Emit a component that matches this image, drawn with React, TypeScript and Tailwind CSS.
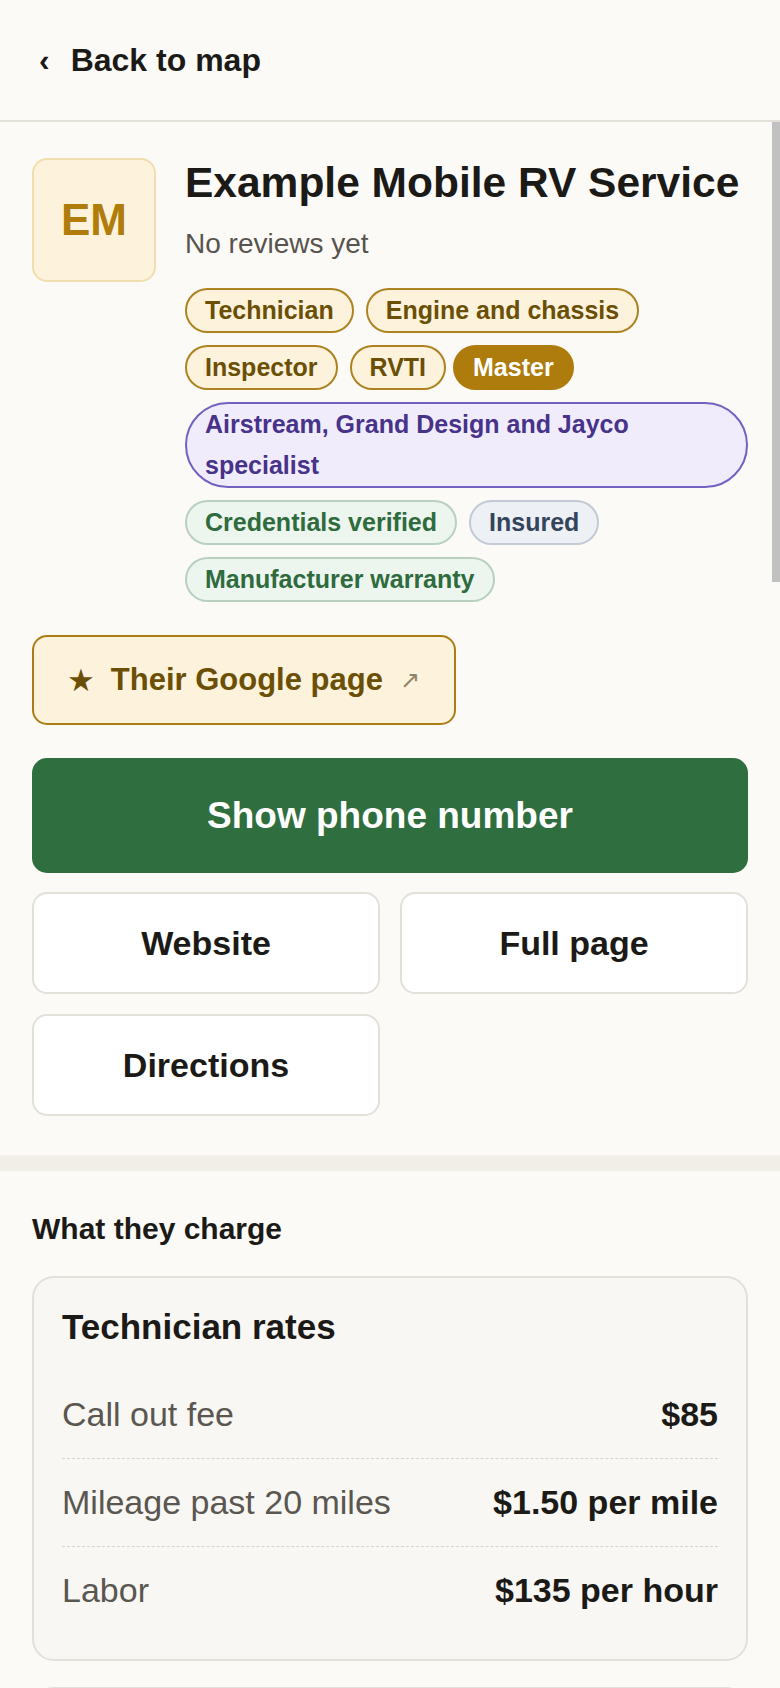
import React from 'react';

const goldPills = ['Technician', 'Engine and chassis', 'Inspector'];

const rates = [
    { label: 'Call out fee', value: '$85' },
    { label: 'Mileage past 20 miles', value: '$1.50 per mile' },
    { label: 'Labor', value: '$135 per hour' },
];

const pill = 'inline-flex items-center rounded-full border-2 px-[18px] text-[25px] leading-[41px] font-bold';

const App = () => {
    return (
        <div className="flex h-[1688px] w-full flex-col overflow-hidden bg-[#fbfaf7] font-['Liberation_Sans',Arial,sans-serif] text-[#1c1a17]">
            {/* Header */}
            <header className="flex h-[122px] shrink-0 items-center gap-[21px] border-b-2 border-[#e3e0d9] pl-[39px]">
                <span className="text-[32px] font-bold">‹</span>
                <span className="text-[32px] font-bold">Back to map</span>
            </header>

            <main className="relative flex-1 overflow-hidden">
                {/* scroll thumb */}
                <div className="absolute top-0 right-0 h-[460px] w-2 bg-[#c1c1c1]" />

                <section className="px-8 pt-[36px] pb-[39px]">
                    <div className="flex gap-[29px]">
                        <div className="flex h-[124px] w-[124px] shrink-0 items-center justify-center rounded-[15px] border-2 border-[#f0dfae] bg-[#fdf3dc] text-[44px] font-bold text-[#b07d0a]">
                            EM
                        </div>
                        <div className="min-w-0 flex-1">
                            <h1 className="text-[42.5px] leading-[50px] font-bold whitespace-nowrap">Example Mobile RV Service</h1>
                            <p className="mt-[15px] text-[28px] leading-[42px] text-[#57534e]">No reviews yet</p>
                            <div className="mt-[23px] flex flex-wrap gap-3">
                                {goldPills.map((p) => (
                                    <span key={p} className={`${pill} border-[#ad8220] bg-[#fdf3dc] text-[#6b4f05]`}>
                                        {p}
                                    </span>
                                ))}
                                <span className="flex gap-[7px]">
                                    <span className={`${pill} border-[#ad8220] bg-[#fdf3dc] text-[#6b4f05]`}>RVTI</span>
                                    <span className={`${pill} border-[#ae7c0c] bg-[#ae7c0c] text-white`}>Master</span>
                                </span>
                                <span className="rounded-[44px] border-2 border-[#7460c0] bg-[#f1ecfb] px-[18px] text-[25px] leading-[41px] font-bold text-[#47338a]">
                                    Airstream, Grand Design and Jayco specialist
                                </span>
                                <span className={`${pill} border-[#b8d1bf] bg-[#edf5ef] text-[#2e6b3d]`}>Credentials verified</span>
                                <span className={`${pill} border-[#c2cad5] bg-[#edf1f6] text-[#34455b]`}>Insured</span>
                                <span className={`${pill} border-[#b8d1bf] bg-[#edf5ef] text-[#2e6b3d]`}>Manufacturer warranty</span>
                            </div>
                        </div>
                    </div>

                    <button className="mt-[33px] inline-flex h-[90px] items-center rounded-[15px] border-2 border-[#ab7d14] bg-[#fdf3dc] pr-[34px] pl-[33px] text-[#6b4f05]">
                        <span className="font-['DejaVu_Sans',sans-serif] text-[31px]">★</span>
                        <span className="ml-[16px] text-[31px] font-bold">Their Google page</span>
                        <span className="ml-[17px] font-['DejaVu_Sans',sans-serif] text-[24px] text-[#8f8266]">↗</span>
                    </button>

                    <button className="mt-[33px] flex h-[115px] w-full items-center justify-center rounded-[15px] bg-[#2f6e3f] text-[37px] font-bold text-white">
                        Show phone number
                    </button>

                    <div className="mt-[19px] grid grid-cols-2 gap-[20px]">
                        {['Website', 'Full page', 'Directions'].map((b) => (
                            <button
                                key={b}
                                className="flex h-[102px] items-center justify-center rounded-[15px] border-2 border-[#e3e0d9] bg-white text-[34px] font-bold"
                            >
                                {b}
                            </button>
                        ))}
                    </div>
                </section>

                <div className="h-4 bg-[#f1eee8]" />

                <section className="px-8 pt-[40px]">
                    <h2 className="text-[30px] leading-[36px] font-bold">What they charge</h2>
                    <div className="mt-[29px] flex flex-col gap-[26px]">
                        <div className="rounded-[22px] border-2 border-[#e3e0d9] bg-[#f8f7f4] px-[28px] pt-[28px] pb-[25px]">
                            <h3 className="text-[35px] leading-[42px] font-bold">Technician rates</h3>
                            <div className="mt-[23px]">
                                {rates.map((r, i) => (
                                    <div
                                        key={r.label}
                                        className={`flex items-baseline justify-between py-[18px] text-[34px] leading-[51px] ${i < rates.length - 1 ? 'border-b border-dashed border-[#d6d3cc]' : ''
                                            }`}
                                    >
                                        <span className="text-[#5a5650]">{r.label}</span>
                                        <span className="font-bold">{r.value}</span>
                                    </div>
                                ))}
                            </div>
                        </div>
                        {/* next card, below the fold */}
                        <div className="h-[260px] rounded-[22px] border-2 border-[#e3e0d9] bg-[#f8f7f4]" />
                    </div>
                </section>
            </main>
        </div>
    );
};

export default App;
